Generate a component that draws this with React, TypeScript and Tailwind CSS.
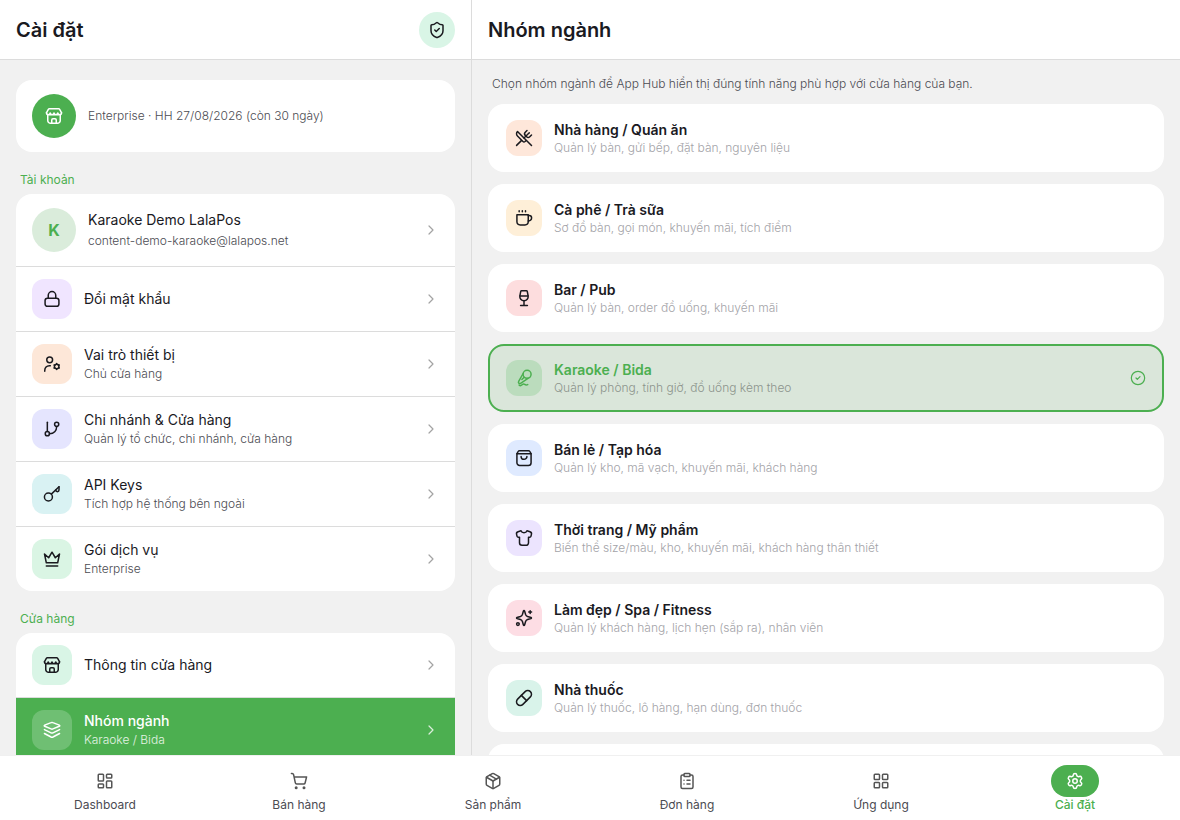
import type { ReactNode } from "react";
import {
  ChevronRight,
  CircleCheck,
  ClipboardList,
  LayoutDashboard,
  LayoutGrid,
  Package,
  Pill,
  Settings,
  ShieldCheck,
  UtensilsCrossed,
} from "lucide-react";

function Glyph({ children }: { children: ReactNode }) {
  return (
    <svg
      width="20"
      height="20"
      viewBox="0 0 24 24"
      fill="none"
      stroke="currentColor"
      strokeWidth="1.8"
      strokeLinecap="round"
      strokeLinejoin="round"
      aria-hidden="true"
    >
      {children}
    </svg>
  );
}

const StoreIcon = () => (
  <Glyph>
    <path d="M2.9 8.3 5.2 4.1c.3-.5.7-.8 1.300-.8h11c.6 0 1 .3 1.300.8l2.300 4.200" />
    <path d="M2.9 8.300a2.280 2.400 0 0 0 4.550 0a2.280 2.400 0 0 0 4.550 0a2.280 2.400 0 0 0 4.550 0a2.280 2.400 0 0 0 4.550 0" />
    <path d="M4.500 11v6.300a3.500 3.500 0 0 0 3.500 3.500h8a3.500 3.500 0 0 0 3.500-3.500V11" />
    <path d="M9.300 20.500v-3.800c0-.9.6-1.500 1.500-1.500h2.400c.9 0 1.500.6 1.500 1.500v3.800" />
  </Glyph>
);

const LockIcon = () => (
  <Glyph>
    <rect x="3.7" y="11" width="16.6" height="9.8" rx="2.8" />
    <path d="M7.500 10.800V7.600a4.500 4.500 0 0 1 9 0v3.200" />
  </Glyph>
);

const UserCogIcon = () => (
  <Glyph>
    <circle cx="9.2" cy="7" r="3.5" />
    <path d="M3.300 20.600v-.8c0-3.400 2.300-5.700 5.500-5.700h1.200" />
    <circle cx="17.6" cy="15" r="2.7" />
    <path d="M17.600 11.400v.9M17.600 17.700v.9M14.500 13.200l.8.5M19.900 16.300l.8.5M14.500 16.800l.8-.5M19.900 13.700l.8-.5" />
  </Glyph>
);

const BranchIcon = () => (
  <Glyph>
    <path d="M6.4 3.8V15" />
    <circle cx="6.4" cy="17.6" r="2.5" />
    <circle cx="17.6" cy="6.4" r="2.5" />
    <path d="M17.6 9c0 5-3.400 8.600-8.600 8.600" />
  </Glyph>
);

const KeyIcon = () => (
  <Glyph>
    <circle cx="7.7" cy="15.6" r="4.800" />
    <path d="m11.200 12.100 9.200-8.800" />
    <path d="M20.400 3.300v4c0 1.100-.8 1.900-1.900 1.900-1.200 0-2-.8-2-1.900" />
  </Glyph>
);

const CrownIcon = () => (
  <Glyph>
    <path d="M5.200 16.600 3 6l5 4.500 4-6.700 4 6.700L21 6l-2.200 10.600z" />
    <path d="M5.200 20.400h13.600" />
  </Glyph>
);

const LayersIcon = () => (
  <Glyph>
    <path d="M10.9 3.200a2.600 2.600 0 0 1 2.200 0l7.700 3c.7.3.7 1 0 1.300l-7.700 3.200a2.600 2.600 0 0 1-2.200 0L3.200 7.500c-.7-.3-.7-1 0-1.300z" />
    <path d="m2.900 11.500 8 4c.7.3 1.500.3 2.200 0l8-4" />
    <path d="m2.900 16.200 8 4.200c.7.3 1.500.3 2.200 0l8-4.200" />
  </Glyph>
);

const CupIcon = () => (
  <Glyph>
    <path d="M3.500 8h13.600v8.300a4 4 0 0 1-4 4H7.500a4 4 0 0 1-4-4z" />
    <path d="M17.100 9h1.200a2.800 2.800 0 0 1 2.800 2.800v.2a3.500 3.500 0 0 1-3.500 3.500h-.5" />
    <path d="M6.200 3.200v1.400M10 3.200v1.400M13.800 3.200v1.400" />
  </Glyph>
);

const WineIcon = () => (
  <Glyph>
    <path d="M9.100 3.200h5.800c.5 0 .9.3 1 .8l1 5.200c.6 3.500-1.700 6.100-4.900 6.100s-5.500-2.600-4.900-6.100l1-5.200c.1-.5.5-.8 1-.8z" />
    <path d="M7.200 9.600h9.600M12 15.500v5.100M7.900 20.900h8.200" />
  </Glyph>
);

const KaraokeIcon = () => (
  <Glyph>
    <circle cx="15.7" cy="7.6" r="4.8" />
    <path d="m11 6.600-5.400 9.500c-.5.9-.4 1.500.2 2.100s1.300.7 2.100.2l8.900-6" />
    <path d="m12.200 11.100-2.700 2.700" />
    <path d="M6.200 20.500c1.200 1 2.400.7 3.500-.4 1.100-1 2.100-1.200 3.100-.5 1.100.9 2.200 1.100 3.700.3" />
  </Glyph>
);

const BagIcon = () => (
  <Glyph>
    <path d="M3.500 7h17v10.600a3.300 3.300 0 0 1-3.300 3.300H6.800a3.300 3.300 0 0 1-3.300-3.300z" />
    <path d="M3.500 6.800 5 4.200c.4-.7.9-1 1.600-1h10.800c.7 0 1.200.3 1.600 1l1.500 2.600" />
    <path d="M8.500 10.100a3.500 3.500 0 0 0 7 0" />
  </Glyph>
);

const ShirtIcon = () => (
  <Glyph>
    <path d="M8.400 3.200c.5 1.400 1.900 2.400 3.600 2.400s3.100-1 3.600-2.400l3.500 1.200c1.500.5 2.200 1.800 1.800 3.200l-.6 2.400c-.2.700-.7 1-1.400 1h-1.500v6.800a3 3 0 0 1-3 3H9.600a3 3 0 0 1-3-3V11H5.100c-.7 0-1.200-.3-1.400-1l-.6-2.400c-.4-1.400.3-2.700 1.800-3.200z" />
  </Glyph>
);

const SparklesIcon = () => (
  <Glyph>
    <path d="M12 3c.3 0 .6.300.7.600l1.200 4.200a3.800 3.800 0 0 0 2.400 2.400l4.100 1.200c.7.300.7.900 0 1.200l-4.100 1.200a3.800 3.800 0 0 0-2.400 2.400l-1.200 4.200c-.3.700-1.100.7-1.400 0l-1.200-4.200a3.800 3.800 0 0 0-2.400-2.400l-4.100-1.200c-.7-.3-.7-.9 0-1.200l4.100-1.200a3.800 3.800 0 0 0 2.400-2.400l1.200-4.200c.1-.3.4-.6.7-.6z" />
    <path d="M19.400 3.200v3.400M17.700 4.900h3.400" />
    <circle cx="4.700" cy="19.300" r="1.600" />
  </Glyph>
);

const CartIcon = () => (
  <Glyph>
    <path d="M2.900 3h.9c.9 0 1.500.5 1.700 1.400l2.100 9.900c.2.900.8 1.300 1.600 1.300h8.500c.9 0 1.400-.4 1.600-1.200l1.800-7.300H6.100" />
    <circle cx="8.600" cy="20" r="0.900" fill="currentColor" />
    <circle cx="18" cy="20" r="0.900" fill="currentColor" />
  </Glyph>
);

interface Row {
  title: string;
  note?: string;
  tile: string;
  icon: ReactNode;
  active?: boolean;
}

const accountRows: Row[] = [
  { title: "Đổi mật khẩu", tile: "bg-[#f0e5ff]", icon: <LockIcon /> },
  { title: "Vai trò thiết bị", note: "Chủ cửa hàng", tile: "bg-[#fde7d8]", icon: <UserCogIcon /> },
  { title: "Chi nhánh & Cửa hàng", note: "Quản lý tổ chức, chi nhánh, cửa hàng", tile: "bg-[#e5e5fe]", icon: <BranchIcon /> },
  { title: "API Keys", note: "Tích hợp hệ thống bên ngoài", tile: "bg-[#d9f2f3]", icon: <KeyIcon /> },
  { title: "Gói dịch vụ", note: "Enterprise", tile: "bg-[#daf5e4]", icon: <CrownIcon /> },
];

const storeRows: Row[] = [
  { title: "Thông tin cửa hàng", tile: "bg-[#d9f5e6]", icon: <StoreIcon /> },
  { title: "Nhóm ngành", note: "Karaoke / Bida", tile: "bg-white/20", icon: <LayersIcon />, active: true },
];

const industries: Row[] = [
  { title: "Nhà hàng / Quán ăn", note: "Quản lý bàn, gửi bếp, đặt bàn, nguyên liệu", tile: "bg-[#fee7da]", icon: <UtensilsCrossed size={18} /> },
  { title: "Cà phê / Trà sữa", note: "Sơ đồ bàn, gọi món, khuyến mãi, tích điểm", tile: "bg-[#feefd8]", icon: <CupIcon /> },
  { title: "Bar / Pub", note: "Quản lý bàn, order đồ uống, khuyến mãi", tile: "bg-[#fdddde]", icon: <WineIcon /> },
  { title: "Karaoke / Bida", note: "Quản lý phòng, tính giờ, đồ uống kèm theo", tile: "bg-[#bbdcbd]", icon: <KaraokeIcon />, active: true },
  { title: "Bán lẻ / Tạp hóa", note: "Quản lý kho, mã vạch, khuyến mãi, khách hàng", tile: "bg-[#dfeaff]", icon: <BagIcon /> },
  { title: "Thời trang / Mỹ phẩm", note: "Biến thể size/màu, kho, khuyến mãi, khách hàng thân thiết", tile: "bg-[#ece4fe]", icon: <ShirtIcon /> },
  { title: "Làm đẹp / Spa / Fitness", note: "Quản lý khách hàng, lịch hẹn (sắp ra), nhân viên", tile: "bg-[#fddde4]", icon: <SparklesIcon /> },
  { title: "Nhà thuốc", note: "Quản lý thuốc, lô hàng, hạn dùng, đơn thuốc", tile: "bg-[#d9f3ea]", icon: <Pill size={18} /> },
];

const tabs: Row[] = [
  { title: "Dashboard", tile: "", icon: <LayoutDashboard size={18} /> },
  { title: "Bán hàng", tile: "", icon: <CartIcon /> },
  { title: "Sản phẩm", tile: "", icon: <Package size={18} /> },
  { title: "Đơn hàng", tile: "", icon: <ClipboardList size={18} /> },
  { title: "Ứng dụng", tile: "", icon: <LayoutGrid size={18} /> },
  { title: "Cài đặt", tile: "", icon: <Settings size={18} />, active: true },
];

function SettingsRow({ row }: { row: Row }) {
  return (
    <button
      type="button"
      className={`flex h-16 w-full shrink-0 items-center gap-3 px-4 text-left ${row.active ? "bg-[#4caf50] text-white" : "text-[#1a1a1f]"}`}
    >
      <span className={`flex size-10 shrink-0 items-center justify-center rounded-xl ${row.tile}`}>{row.icon}</span>
      <span className="flex min-w-0 flex-1 flex-col">
        <span className={`text-sm leading-5 ${row.active ? "font-medium" : ""}`}>{row.title}</span>
        {row.note && (
          <span className={`text-xs leading-[18px] font-light ${row.active ? "text-white/85" : "text-[#4b4b52]"}`}>
            {row.note}
          </span>
        )}
      </span>
      <ChevronRight size={16} strokeWidth={1.8} className={row.active ? "text-white/80" : "text-[#a3a3a3]"} />
    </button>
  );
}

function SectionLabel({ children }: { children: ReactNode }) {
  return <h2 className="mt-5 mb-1.5 px-1 text-xs leading-4 text-[#4caf50]">{children}</h2>;
}

function IndustryCard({ item }: { item: Row }) {
  return (
    <button
      type="button"
      className={`flex h-[68px] w-full shrink-0 items-center gap-3 rounded-2xl border-2 px-4 text-left ${
        item.active ? "border-[#4caf50] bg-[#dae6da] text-[#4caf50]" : "border-white bg-white text-[#1a1a1f]"
      }`}
    >
      <span className={`flex size-9 shrink-0 items-center justify-center rounded-xl ${item.tile}`}>{item.icon}</span>
      <span className="flex min-w-0 flex-1 flex-col">
        <span className="text-sm leading-5 font-semibold">{item.title}</span>
        <span className={`text-xs leading-4 font-light ${item.active ? "text-[#8c948c]" : "text-[#a3a3a8]"}`}>
          {item.note}
        </span>
      </span>
      {item.active && <CircleCheck size={16} strokeWidth={1.8} />}
    </button>
  );
}

export default function App() {
  return (
    <div className="flex h-screen flex-col bg-[#f1f1f1] font-['Inter','Noto_Sans',sans-serif] text-[#1a1a1f]">
      <div className="flex min-h-0 flex-1">
        <aside className="flex w-2/5 flex-col border-r border-[#dcdcdc]">
          <header className="flex h-15 shrink-0 items-center justify-between border-b border-[#dcdcdc] bg-white px-4">
            <h1 className="text-xl font-semibold">Cài đặt</h1>
            <button type="button" aria-label="Bảo mật" className="flex size-9 items-center justify-center rounded-full bg-[#d9f5e6]">
              <ShieldCheck size={18} />
            </button>
          </header>
          <div className="flex min-h-0 flex-1 flex-col overflow-y-auto px-4 pt-5 [scrollbar-width:none]">
            <div className="flex h-18 shrink-0 items-center gap-3 rounded-2xl bg-white px-4">
              <span className="flex size-11 shrink-0 items-center justify-center rounded-full bg-[#4caf50] text-white">
                <StoreIcon />
              </span>
              <p className="text-xs font-light text-[#4b4b52]">Enterprise · HH 27/08/2026 (còn 30 ngày)</p>
            </div>

            <SectionLabel>Tài khoản</SectionLabel>
            <div className="flex shrink-0 flex-col divide-y divide-[#dcdcdc] overflow-hidden rounded-2xl bg-white">
              <button type="button" className="flex h-[73px] w-full items-center gap-3 px-4 text-left">
                <span className="flex size-11 shrink-0 items-center justify-center rounded-full bg-[#daecdb] text-base font-bold text-[#4caf50]">
                  K
                </span>
                <span className="flex min-w-0 flex-1 flex-col gap-0.5">
                  <span className="text-sm leading-5">Karaoke Demo LalaPos</span>
                  <span className="text-xs leading-[18px] font-light text-[#4b4b52]">content-demo-karaoke@lalapos.net</span>
                </span>
                <ChevronRight size={16} strokeWidth={1.8} className="text-[#a3a3a3]" />
              </button>
              {accountRows.map((row) => (
                <div key={row.title}>
                  <SettingsRow row={row} />
                </div>
              ))}
            </div>

            <SectionLabel>Cửa hàng</SectionLabel>
            <div className="flex shrink-0 flex-col divide-y divide-[#dcdcdc] overflow-hidden rounded-t-2xl bg-white">
              {storeRows.map((row) => (
                <div key={row.title}>
                  <SettingsRow row={row} />
                </div>
              ))}
            </div>
          </div>
        </aside>

        <main className="flex min-w-0 flex-1 flex-col">
          <header className="flex h-15 shrink-0 items-center border-b border-[#dcdcdc] bg-white px-4">
            <h1 className="text-xl font-semibold">Nhóm ngành</h1>
          </header>
          <div className="flex min-h-0 flex-1 flex-col overflow-y-auto px-4 pt-4 [scrollbar-width:none]">
            <p className="mb-3 px-1 text-xs leading-4 font-light text-[#4b4b52]">
              Chọn nhóm ngành để App Hub hiển thị đúng tính năng phù hợp với cửa hàng của bạn.
            </p>
            <div className="flex flex-col gap-3">
              {industries.map((item) => (
                <IndustryCard key={item.title} item={item} />
              ))}
              <div className="h-[68px] shrink-0 rounded-2xl bg-white" />
            </div>
          </div>
        </main>
      </div>

      <nav className="flex shrink-0 border-t border-[#f0f0f0] bg-white px-2 pt-[9px] pb-[7px]">
        {tabs.map((tab) => (
          <button
            key={tab.title}
            type="button"
            className={`flex flex-1 flex-col items-center text-xs leading-4 ${tab.active ? "font-medium text-[#4caf50]" : "text-[#4b4b52]"}`}
          >
            <span className={`flex h-8 w-12 items-center justify-center rounded-2xl ${tab.active ? "bg-[#4caf50] text-white" : "text-[#555555]"}`}>
              {tab.icon}
            </span>
            {tab.title}
          </button>
        ))}
      </nav>
    </div>
  );
}
